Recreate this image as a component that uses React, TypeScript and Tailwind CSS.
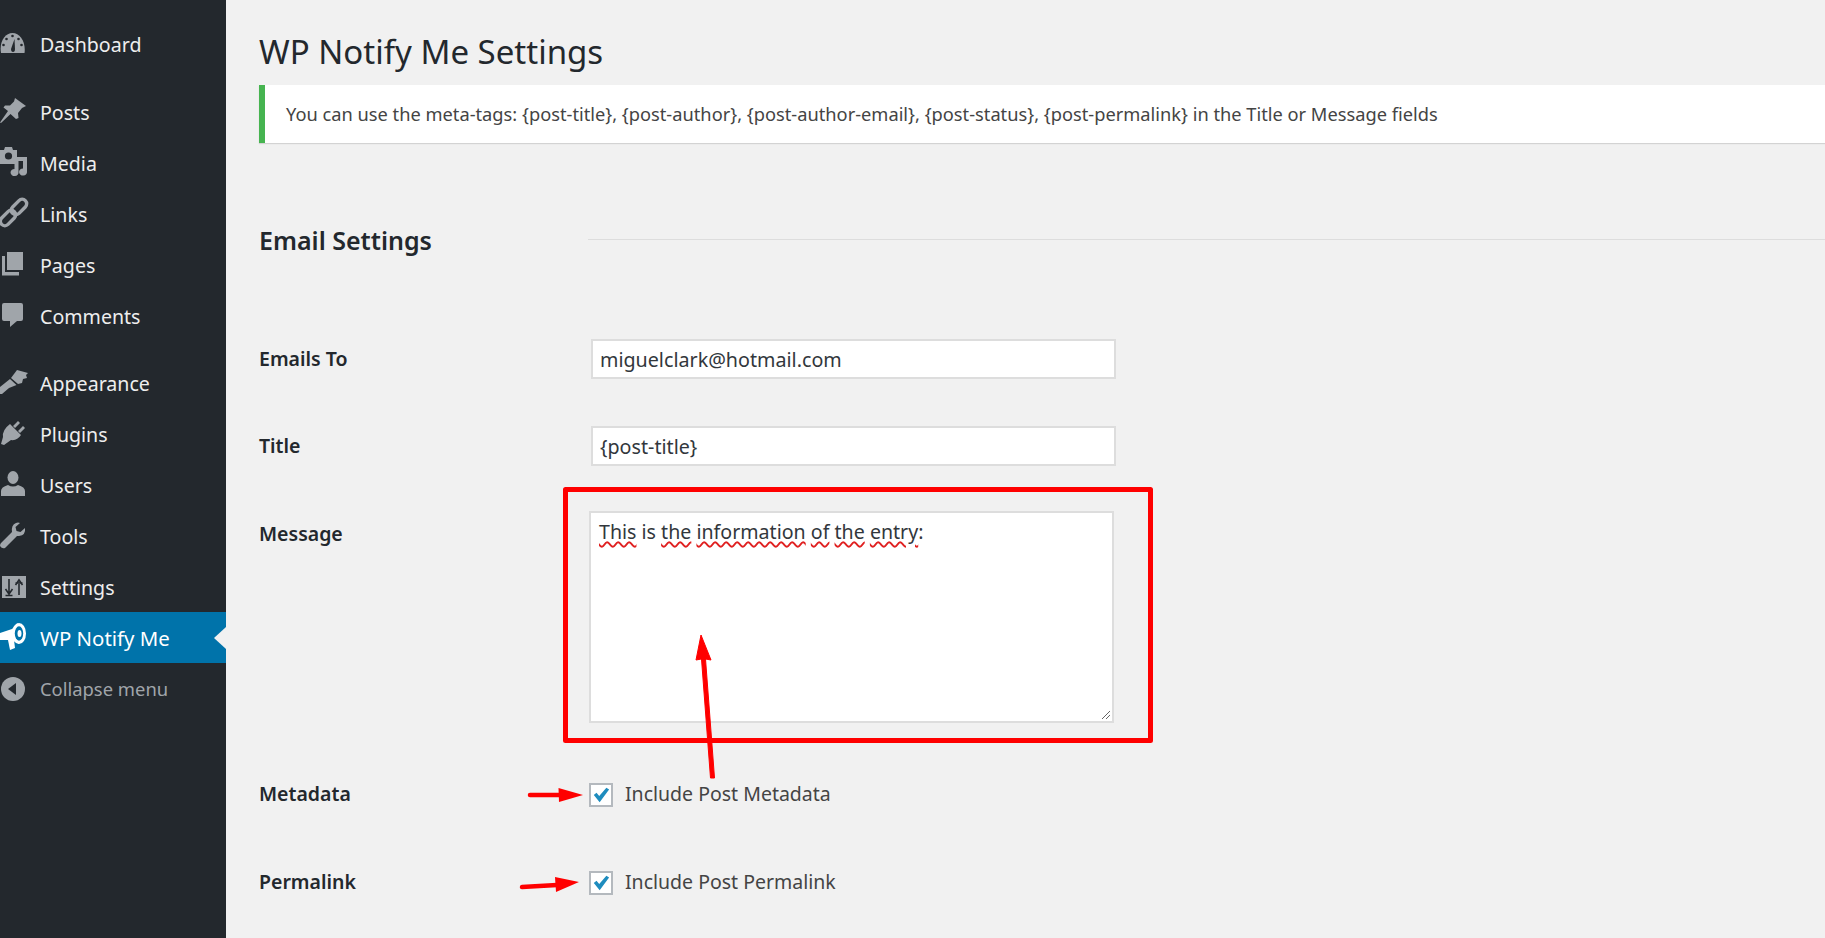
import React from "react";

// Dashicons are not in the icon packages, so these are drawn by hand on a 28x28 box
const icons: Record<string, React.ReactNode> = {
  dashboard: (
    <>
      <path d="M1 22 C-1 11 5 2 12.5 2 C20 2 26 11 24.5 22 Z" fill="currentColor" />
      <circle cx="12.5" cy="5" r="1.3" fill="#23282d" />
      <circle cx="6.5" cy="8" r="1.3" fill="#23282d" />
      <circle cx="18.5" cy="8" r="1.3" fill="#23282d" />
      <circle cx="3.5" cy="14" r="1.3" fill="#23282d" />
      <circle cx="21.5" cy="14" r="1.3" fill="#23282d" />
      <path d="M14.5 8 L11 18 Q11 21 13 21 Q15 21 15 18 Z" fill="#23282d" />
    </>
  ),
  posts: <path d="M15 0 L26 8 L22 10 L18 15 L18.5 20 L16 21 L10.5 16 L1 25 L0 24.5 L8 13 L3.5 9.5 L5 7.5 L10 7.5 L14 3.5 Z" fill="currentColor" />,
  media: (
    <>
      <path d="M0 1 H4 L5 -2 H12 L13 1 H17 V15 H0 Z" fill="currentColor" />
      <circle cx="8.5" cy="7" r="3.6" fill="#23282d" />
      <path d="M17 8 H27 V22.5 A4 3.5 0 1 1 23 19.5 V12 H18.5 V23 A4 3.5 0 1 1 14.5 20 V15 H17 Z" fill="currentColor" />
    </>
  ),
  links: (
    <g fill="none" stroke="currentColor" strokeWidth="3.4">
      <rect x="-9" y="-4.5" width="18" height="9" rx="4.5" transform="translate(8 18) rotate(-45)" />
      <rect x="-9" y="-4.5" width="18" height="9" rx="4.5" transform="translate(19 7) rotate(-45)" />
    </g>
  ),
  pages: (
    <>
      <path d="M7 1 H23 V19 H7 Z" fill="currentColor" />
      <path d="M2 5 H5 V21 H19 V24.5 H2 Z" fill="currentColor" />
    </>
  ),
  comments: <path d="M4 1 H21 Q23 1 23 3 V17 Q23 19 21 19 H17 L10 25 V19 H4 Q2 19 2 17 V3 Q2 1 4 1 Z" fill="currentColor" />,
  appearance: <path d="M17 1 L28 4 L26 6 L27 9 L23 10 L22 14 L18 15 L11 9 Z M10 10 L16.5 16 L9 19 L2 25 L0 25 L0 18 L5 14 Z" fill="currentColor" />,
  plugins: (
    <>
      <path d="M10 4 L21 15 Q17 21 11 20 L4 25 L1 24 L3 17 Q2 10 10 4 Z" fill="currentColor" />
      <path d="M13 6 L18 1 L20 3 L15 8 Z M18 11 L23 6 L25 8 L20 13 Z" fill="currentColor" />
    </>
  ),
  users: (
    <>
      <ellipse cx="13" cy="6.5" rx="5.5" ry="6.5" fill="currentColor" />
      <path d="M1 25 V20 Q1 16 8 14 Q13 17 18 14 Q25 16 25 20 V25 Z" fill="currentColor" />
    </>
  ),
  tools: <path d="M25 6 Q26 13 19 14 L17 14 L5 26 Q2 27 0 24 Q0 22 1 21 L12 10 Q11 3 16 1 Q18 0 20 1 L15.5 5 L16.5 9 L20.5 10 Z" fill="currentColor" />,
  settings: (
    <>
      <rect x="2" y="3" width="24" height="22" fill="currentColor" />
      <path d="M9 6 V20 M5.5 16 L9 21 L12.5 16 M5.5 22.5 H12.5 M19 11 V22 M15.5 10 H22.5 M15.5 12 L19 7 L22.5 12" fill="none" stroke="#23282d" strokeWidth="1.6" />
    </>
  ),
  notify: (
    <>
      <path d="M0 9 L12 5 L18 -1 L19 20 L12 16 L0 16 Z" fill="currentColor" />
      <path d="M8 16 L14 16 L15 24 L10 26 Z" fill="currentColor" />
      <ellipse cx="19" cy="9.5" rx="7" ry="10.5" fill="currentColor" />
      <ellipse cx="19" cy="9.5" rx="4.2" ry="7.2" fill="#0073aa" />
      <ellipse cx="19.5" cy="9.5" rx="2" ry="3.6" fill="currentColor" />
    </>
  ),
  collapse: (
    <>
      <circle cx="13" cy="14" r="12" fill="currentColor" />
      <path d="M16 8 V20 L8 14 Z" fill="#23282d" />
    </>
  ),
};

const menuGroups = [
  [{ id: "dashboard", label: "Dashboard" }],
  [
    { id: "posts", label: "Posts" },
    { id: "media", label: "Media" },
    { id: "links", label: "Links" },
    { id: "pages", label: "Pages" },
    { id: "comments", label: "Comments" },
  ],
  [
    { id: "appearance", label: "Appearance" },
    { id: "plugins", label: "Plugins" },
    { id: "users", label: "Users" },
    { id: "tools", label: "Tools" },
    { id: "settings", label: "Settings" },
  ],
];

const MenuIcon = ({ id }: { id: string }) => (
  <svg viewBox="0 0 28 28" className="w-7 h-7 shrink-0 overflow-visible" aria-hidden="true">
    {icons[id]}
  </svg>
);

const MenuItem = ({ id, label }: { id: string; label: string }) => (
  <div className="flex items-center h-[51px] text-[#eeeeee]">
    <div className="w-10 shrink-0 text-[#a0a5aa]">
      <MenuIcon id={id} />
    </div>
    <span className={id === "dashboard" ? "" : "mt-[2px]"}>{label}</span>
  </div>
);

const Sidebar = () => (
  <aside className="w-[226px] shrink-0 bg-[#23282d] pt-[19px] text-[19.6px]">
    {menuGroups.map((group, i) => (
      <div key={i} className="mb-[16px]">
        {group.map((item) => (
          <MenuItem key={item.id} {...item} />
        ))}
      </div>
    ))}
    <div className="relative flex items-center h-[51px] -mt-[16px] bg-[#0073aa] text-white">
      <div className="w-10 shrink-0">
        <MenuIcon id="notify" />
      </div>
      <span className="mt-[2px] text-[20.4px]">WP Notify Me</span>
      <div className="absolute right-0 top-[15px] border-y-[11px] border-y-transparent border-r-[12px] border-r-[#f1f1f1]" />
    </div>
    <div className="flex items-center h-[51px] text-[#a0a5aa]">
      <div className="w-10 shrink-0">
        <MenuIcon id="collapse" />
      </div>
      <span className="text-[18.4px]">Collapse menu</span>
    </div>
  </aside>
);

const Label = ({ children }: { children: React.ReactNode }) => (
  <div className="w-[330px] shrink-0 font-semibold text-[19.5px] text-[#23282d]">{children}</div>
);

const TextField = ({ value }: { value: string }) => (
  <input
    readOnly
    value={value}
    className="w-[525px] h-[40px] ml-[2px] px-[7px] bg-white border-2 border-[#dddddd] text-[19.7px] text-[#32373c] outline-none"
  />
);

const Check = () => (
  <div className="flex items-center justify-center w-6 h-6 bg-white border-2 border-[#b4b9be]">
    <svg viewBox="0 0 20 20" className="w-[18px] h-[18px]" aria-hidden="true">
      <path d="M2 10 L5 7.5 L8 11 L16 2 L19 4 L8.5 18 Z" fill="#1e8cbe" />
    </svg>
  </div>
);

const CheckRow = ({ title, text, className }: { title: string; text: string; className: string }) => (
  <div className={`flex items-center ${className}`}>
    <Label>
      <div className="-mt-[2px]">{title}</div>
    </Label>
    <Check />
    <span className="ml-3 -mt-[3px] text-[19.5px] text-[#444444]">{text}</span>
  </div>
);

const Squiggle = ({ children }: { children: React.ReactNode }) => (
  <span className="underline decoration-wavy decoration-[#e02020] decoration-[1.5px] underline-offset-2">{children}</span>
);

// red marks someone put on the screenshot
const Annotations = () => (
  <svg
    viewBox="0 0 1825 938"
    className="absolute inset-0 w-[1825px] h-[938px] pointer-events-none"
    aria-hidden="true"
  >
    <rect x="565.5" y="489.5" width="585" height="251" fill="none" stroke="#ff0000" strokeWidth="5" strokeLinejoin="round" />
    <path d="M701 635 L711 660 L705.5 659 L714.5 778 L710.5 778 L701.5 659 L696 660 Z" fill="#ff0000" stroke="#ff0000" strokeWidth="1" strokeLinejoin="round" />
    <path d="M530 795 L560 795" stroke="#ff0000" strokeWidth="4.5" strokeLinecap="round" />
    <path d="M558.5 788 L583 795 L559 802 Z" fill="#ff0000" />
    <path d="M522 887 L557 885" stroke="#ff0000" strokeWidth="4.5" strokeLinecap="round" />
    <path d="M555 877 L579 882 L556 892 Z" fill="#ff0000" />
  </svg>
);

export default function App() {
  return (
    <div className="relative flex h-[938px] w-[1825px] overflow-hidden bg-[#f1f1f1] font-['Noto_Sans','Open_Sans',sans-serif]">
      <Sidebar />

      <main className="flex-1 min-w-0 pt-[28px] pl-[33px]">
        <h1 className="h-[48px] leading-[48px] text-[33px] text-[#23282d]">WP Notify Me Settings</h1>

        <div className="flex items-center h-[58px] mt-[9px] pl-[21px] bg-white border-l-[6px] border-[#46b450] shadow-[0_1px_1px_rgba(0,0,0,0.12)] text-[18.25px] text-[#444444]">
          You can use the meta-tags: {"{post-title}"}, {"{post-author}"}, {"{post-author-email}"}, {"{post-status}"}, {"{post-permalink}"} in the Title or Message fields
        </div>

        <div className="flex items-center h-[40px] mt-[78px]">
          <h2 className="w-[329px] shrink-0 font-semibold text-[25px] text-[#23282d]">Email Settings</h2>
          <div className="flex-1 h-px -mt-[4px] bg-[#dddddd]" />
        </div>

        <div className="flex items-center mt-[78px]">
          <Label>Emails To</Label>
          <TextField value="miguelclark@hotmail.com" />
        </div>

        <div className="flex items-center mt-[47px]">
          <Label>Title</Label>
          <TextField value="{post-title}" />
        </div>

        <div className="flex mt-[45px]">
          <Label>
            <div className="mt-[8px]">Message</div>
          </Label>
          <div className="relative w-[525px] h-[212px] px-[8px] pt-[4px] bg-white border-2 border-[#dddddd] text-[19.6px] text-[#32373c]">
            <Squiggle>This</Squiggle> is <Squiggle>the</Squiggle> <Squiggle>information</Squiggle> <Squiggle>of</Squiggle> <Squiggle>the</Squiggle> <Squiggle>entry</Squiggle>:
            <svg viewBox="0 0 10 10" className="absolute right-px bottom-px w-[10px] h-[10px]" aria-hidden="true">
              <path d="M1 9 L9 1 M5 9 L9 5" stroke="#666666" strokeWidth="1" />
            </svg>
          </div>
        </div>

        <CheckRow title="Metadata" text="Include Post Metadata" className="mt-[58px]" />
        <CheckRow title="Permalink" text="Include Post Permalink" className="mt-[61px]" />
      </main>

      <Annotations />
    </div>
  );
}
